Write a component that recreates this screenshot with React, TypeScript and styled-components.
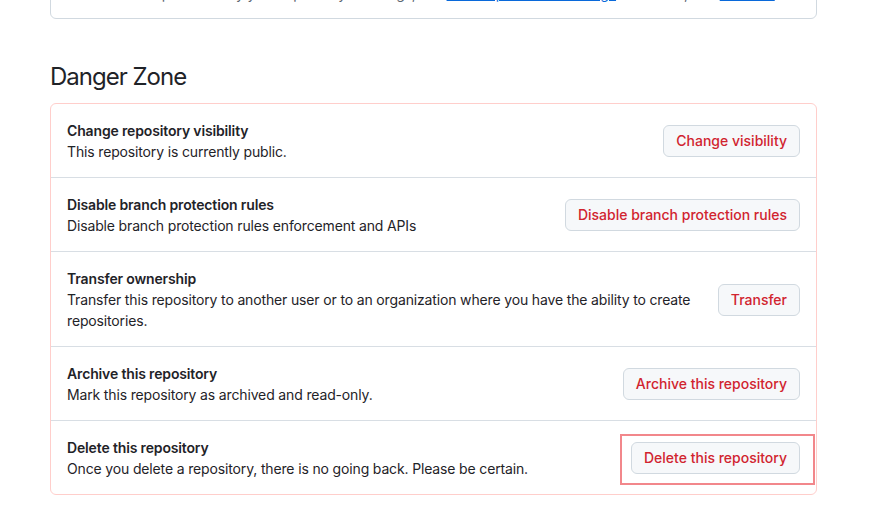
import React from "react";
import styled, { createGlobalStyle } from "styled-components";

const Global = createGlobalStyle`
  html, body { margin: 0; padding: 0; background: #ffffff; }
  body {
    font-family: Inter, "Noto Sans", "Liberation Sans", sans-serif;
    color: #1f2328;
    font-size: 14px;
    line-height: 1.5;
    letter-spacing: -0.15px;
    overflow: hidden;
  }
`;

const Page = styled.div`
  width: 767px;
  padding-left: 50px;
  padding-right: 71px;
`;

const TopBox = styled.div`
  margin-top: -36px;
  border: 1px solid #d1d9e0;
  border-radius: 6px;
  padding: 18px 16px 14px;
  font-size: 14px;
  line-height: 21px;
  color: #59636e;
  white-space: nowrap;
`;

const Link = styled.a`
  color: #0969da;
  text-decoration: underline;
`;

const Heading = styled.h2`
  margin: 43px 0 11px;
  font-size: 24px;
  font-weight: 400;
  line-height: 30px;
  letter-spacing: -1px;
  color: #1f2328;
`;

const DangerBox = styled.div`
  border: 1px solid #ffcecb;
  border-radius: 6px;
`;

const Row = styled.div`
  display: flex;
  align-items: center;
  gap: 16px;
  padding: 16px 16px 15px;
  & + & {
    border-top: 1px solid #d8dee4;
  }
`;

const Info = styled.div`
  flex: 1;
  min-width: 0;
`;

const Title = styled.div`
  font-weight: 600;
  line-height: 21px;
  color: #1f2328;
`;

const Desc = styled.p`
  margin: 0;
  line-height: 21px;
  color: #1f2328;
`;

const ButtonWrap = styled.div<{ $highlight?: boolean }>`
  position: relative;
  flex: none;
  display: flex;
  ${(p) =>
    p.$highlight
      ? `&::after {
          content: "";
          position: absolute;
          left: -11px;
          right: -15px;
          top: -8px;
          bottom: -11px;
          border: 2px solid #f2878b;
          pointer-events: none;
        }`
      : ""}
`;

const DangerButton = styled.button`
  height: 32px;
  padding: 0 12px;
  border: 1px solid #d1d9e0;
  border-radius: 6px;
  background: #f6f8fa;
  color: #d1242f;
  font-family: inherit;
  font-size: 14px;
  font-weight: 500;
  line-height: 20px;
  letter-spacing: 0;
  white-space: nowrap;
  cursor: pointer;
`;

type Item = { title: string; desc: string; action: string; highlight?: boolean };

const items: Item[] = [
  {
    title: "Change repository visibility",
    desc: "This repository is currently public.",
    action: "Change visibility",
  },
  {
    title: "Disable branch protection rules",
    desc: "Disable branch protection rules enforcement and APIs",
    action: "Disable branch protection rules",
  },
  {
    title: "Transfer ownership",
    desc: "Transfer this repository to another user or to an organization where you have the ability to create repositories.",
    action: "Transfer",
  },
  {
    title: "Archive this repository",
    desc: "Mark this repository as archived and read-only.",
    action: "Archive this repository",
  },
  {
    title: "Delete this repository",
    desc: "Once you delete a repository, there is no going back. Please be certain.",
    action: "Delete this repository",
    highlight: true,
  },
];

export default function App() {
  return (
    <>
      <Global />
      <Page>
        <TopBox>
          This branch is protected by your repository's settings, see{" "}
          <Link href="#">branch protection settings</Link> for details, and{" "}
          <Link href="#">Rulesets</Link>.
        </TopBox>
        <Heading>Danger Zone</Heading>
        <DangerBox>
          {items.map((it) => (
            <Row key={it.title}>
              <Info>
                <Title>{it.title}</Title>
                <Desc>{it.desc}</Desc>
              </Info>
              <ButtonWrap $highlight={it.highlight}>
                <DangerButton type="button">{it.action}</DangerButton>
              </ButtonWrap>
            </Row>
          ))}
        </DangerBox>
      </Page>
    </>
  );
}
